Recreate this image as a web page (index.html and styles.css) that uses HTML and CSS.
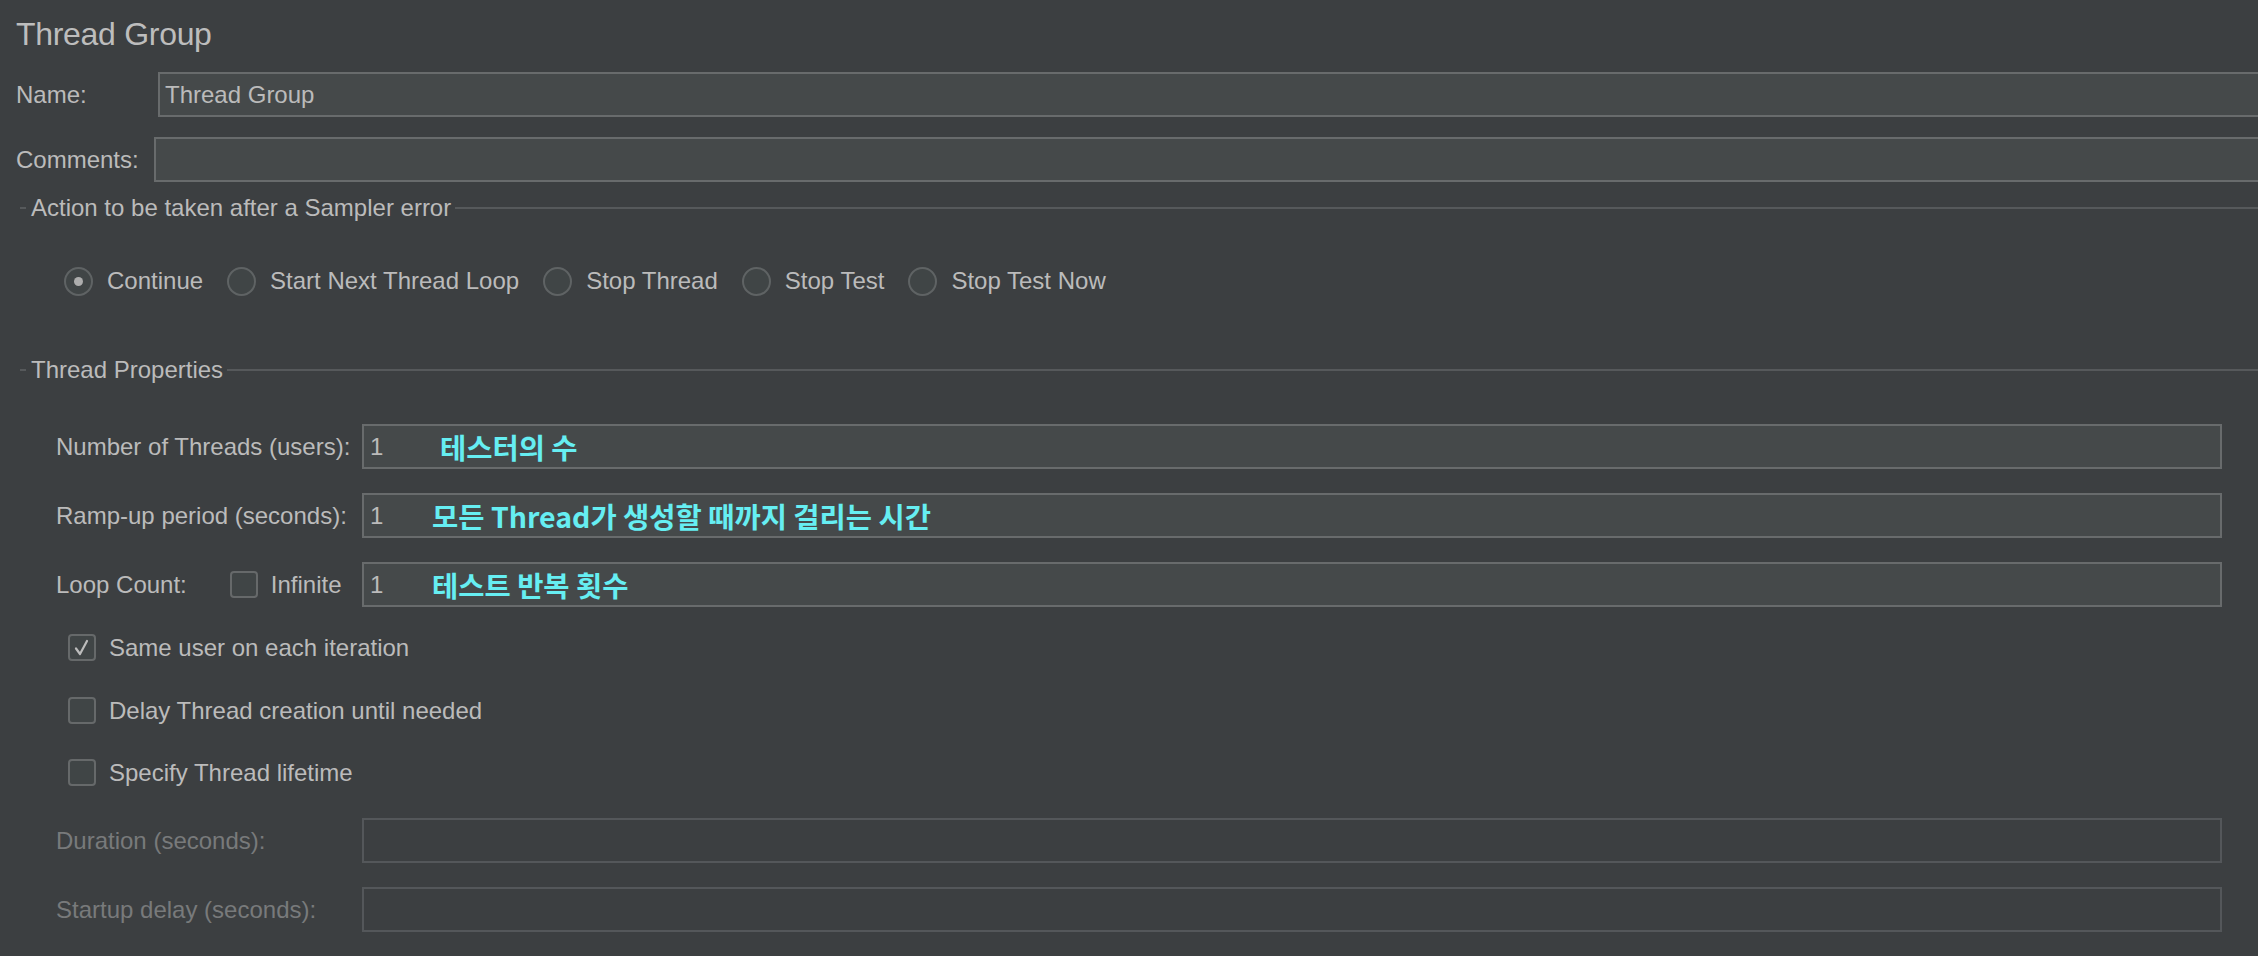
FILE: index.html
```html
<!DOCTYPE html>
<html lang="en">
<head>
<meta charset="utf-8">
<title>Thread Group</title>
<link rel="stylesheet" href="styles.css">
</head>
<body>
<div class="panel">
  <div class="title">Thread Group</div>

  <div class="row name-row">
    <span class="label name-label">Name:</span>
    <div class="field open">Thread Group</div>
  </div>

  <div class="row comments-row">
    <span class="label comments-label">Comments:</span>
    <div class="field open"></div>
  </div>

  <div class="group-head action-head">
    <span class="rule-start"></span>
    <span class="group-title">Action to be taken after a Sampler error</span>
    <span class="rule-rest"></span>
  </div>

  <div class="radios">
    <div class="radio-item"><span class="radio checked"><span class="dot"></span></span><span>Continue</span></div>
    <div class="radio-item"><span class="radio"></span><span>Start Next Thread Loop</span></div>
    <div class="radio-item"><span class="radio"></span><span>Stop Thread</span></div>
    <div class="radio-item"><span class="radio"></span><span>Stop Test</span></div>
    <div class="radio-item"><span class="radio"></span><span>Stop Test Now</span></div>
  </div>

  <div class="group-head props-head">
    <span class="rule-start"></span>
    <span class="group-title">Thread Properties</span>
    <span class="rule-rest"></span>
  </div>

  <div class="props">
    <div class="prop-row first">
      <div class="prop-label">Number of Threads (users):</div>
      <div class="field prop-field"><span class="value">1</span><span class="note note-wide">테스터의 수</span></div>
    </div>
    <div class="prop-row">
      <div class="prop-label">Ramp-up period (seconds):</div>
      <div class="field prop-field"><span class="value">1</span><span class="note">모든 Thread가 생성할 때까지 걸리는 시간</span></div>
    </div>
    <div class="prop-row">
      <div class="prop-label loop-label">
        <span>Loop Count:</span>
        <span class="checkbox loop-box"></span>
        <span class="infinite">Infinite</span>
      </div>
      <div class="field prop-field"><span class="value">1</span><span class="note">테스트 반복 횟수</span></div>
    </div>

    <div class="check-row same-user">
      <span class="checkbox">
        <svg viewBox="0 0 24 24" width="24" height="24"><polyline points="6,12.5 10,18 17,5" fill="none" stroke="#bcbcbc" stroke-width="2.2" stroke-linecap="round" stroke-linejoin="round"/></svg>
      </span>
      <span>Same user on each iteration</span>
    </div>
    <div class="check-row delay">
      <span class="checkbox"></span>
      <span>Delay Thread creation until needed</span>
    </div>
    <div class="check-row lifetime">
      <span class="checkbox"></span>
      <span>Specify Thread lifetime</span>
    </div>

    <div class="prop-row disabled duration">
      <div class="prop-label">Duration (seconds):</div>
      <div class="field prop-field"></div>
    </div>
    <div class="prop-row disabled">
      <div class="prop-label">Startup delay (seconds):</div>
      <div class="field prop-field"></div>
    </div>
  </div>
</div>
</body>
</html>
```

FILE: styles.css
```css
html, body {
  margin: 0;
  padding: 0;
  background: #3c3f41;
  overflow: hidden;
}

body {
  font-family: "Liberation Sans", Arial, sans-serif;
  font-size: 24px;
  color: #bbbbbb;
  width: 2258px;
  height: 956px;
}

.panel {
  padding-left: 16px;
  display: flex;
  flex-direction: column;
}

.title {
  font-size: 32px;
  line-height: 45px;
  height: 45px;
  margin-top: 12px;
  color: #bdbdbd;
  letter-spacing: -0.3px;
}

.row {
  display: flex;
  align-items: center;
  height: 45px;
}

.name-row { margin-top: 15px; }
.comments-row { margin-top: 20px; }

.label { flex: none; white-space: nowrap; }
.name-label { width: 142px; }
.comments-label { width: 138px; }

.field {
  box-sizing: border-box;
  height: 45px;
  background: #45494a;
  border: 2px solid #686b6c;
  display: flex;
  align-items: center;
  padding-left: 6px;
  color: #bbbbbb;
  white-space: nowrap;
}

.field.open {
  flex: 1;
  border-right-width: 0;
  padding-left: 5px;
}

.group-head {
  display: flex;
  align-items: center;
  height: 30px;
}

.action-head { margin-top: 11px; }
.props-head { margin-top: 59px; }

.rule-start {
  width: 6px;
  height: 2px;
  margin-left: 4px;
  background: #56595b;
  flex: none;
}

.group-title {
  padding: 0 4px 0 5px;
  white-space: nowrap;
}

.rule-rest {
  flex: 1;
  height: 2px;
  background: #56595b;
}

.radios {
  display: flex;
  align-items: center;
  height: 30px;
  margin-top: 43px;
  padding-left: 48px;
  gap: 24px;
}

.radio-item {
  display: flex;
  align-items: center;
  gap: 14px;
  white-space: nowrap;
}

.radio {
  box-sizing: border-box;
  width: 29px;
  height: 29px;
  border-radius: 50%;
  border: 2px solid #5f6364;
  background: #404546;
  display: flex;
  align-items: center;
  justify-content: center;
  flex: none;
}

.radio .dot {
  width: 9px;
  height: 9px;
  border-radius: 50%;
  background: #adadad;
}

.props {
  display: flex;
  flex-direction: column;
}

.prop-row {
  display: flex;
  align-items: center;
  height: 45px;
  margin-top: 24px;
  padding-right: 36px;
}

.prop-row.first { margin-top: 39px; }

.prop-label {
  width: 346px;
  flex: none;
  padding-left: 40px;
  box-sizing: border-box;
  white-space: nowrap;
}

.loop-label {
  display: flex;
  align-items: center;
}

.loop-box { margin-left: 43px; }

.infinite { margin-left: 13px; }

.prop-field {
  flex: 1;
}

.value { width: 62px; flex: none; }

.note {
  font-family: "Noto Sans CJK KR", "Noto Sans", sans-serif;
  font-weight: 700;
  font-size: 28.5px;
  color: #66eef2;
}

.note-wide { margin-left: 8px; }

.checkbox {
  box-sizing: border-box;
  width: 28px;
  height: 27px;
  border: 2px solid #66696a;
  border-radius: 4px;
  background: #404546;
  display: inline-flex;
  align-items: center;
  justify-content: center;
  flex: none;
}

.check-row {
  display: flex;
  align-items: center;
  height: 27px;
  padding-left: 52px;
  gap: 13px;
  white-space: nowrap;
}

.same-user { margin-top: 27px; }
.delay { margin-top: 36px; }
.lifetime { margin-top: 35px; }

.prop-row.disabled .prop-label { color: #787a7b; }
.prop-row.disabled .field {
  background: #3c3f41;
  border-color: #54575a;
}

.prop-row.duration { margin-top: 32px; }
```
